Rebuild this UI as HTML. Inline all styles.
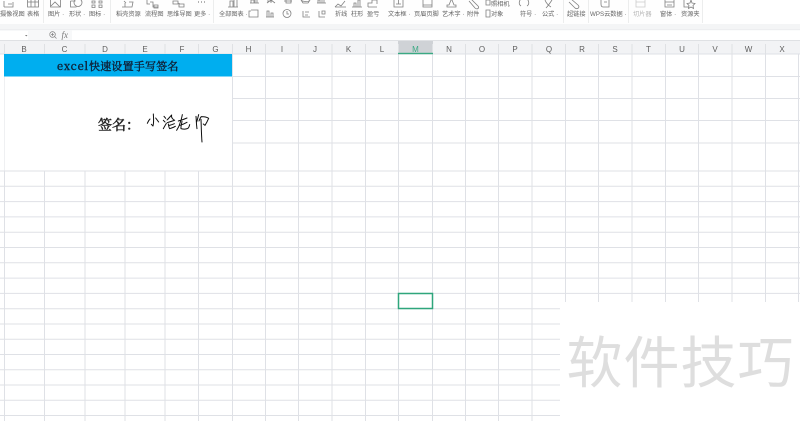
<!DOCTYPE html>
<html lang="zh"><head><meta charset="utf-8"><title>excel快速设置手写签名</title>
<style>
html,body{margin:0;padding:0;background:#fff}
svg{display:block}
.tb text{font:6.2px "Liberation Sans","Noto Sans CJK SC",sans-serif;fill:#666}
.ic{fill:none;stroke:#808080;stroke-width:.8}
.h text{font:8px "Liberation Sans","Noto Sans CJK SC",sans-serif;fill:#5f5f5f;text-anchor:middle}
</style></head><body>
<svg width="800" height="421" viewBox="0 0 800 421" xmlns="http://www.w3.org/2000/svg">
<defs><filter id="b" x="-2%" y="-10%" width="104%" height="120%"><feGaussianBlur stdDeviation=".3"/></filter>
<filter id="s" x="-5%" y="-5%" width="110%" height="110%"><feGaussianBlur stdDeviation=".25"/></filter></defs>
<rect width="800" height="421" fill="#fff"/>
<!-- toolbar -->
<rect x="0" y="0" width="702" height="24" fill="#fefefe"/>
<rect x="0" y="24" width="800" height="6" fill="#f4f5f6"/>
<rect x="0" y="29.5" width="800" height="1" fill="#e6e7e9"/>
<rect x="0" y="30" width="800" height="11" fill="#f7f8f9"/>
<rect x="0" y="31" width="28" height="9" fill="#fff"/>
<rect x="72" y="30.5" width="728" height="10" fill="#fff"/>
<path d="M25 35h2.5l-1.2 1.4z" fill="#777"/>
<g stroke="#eceded" stroke-width="1"><path d="M43.5 0V23M110.5 0V23M213.5 0V23M563.5 0V23M588.5 0V23M628.5 0V23M702.5 0V23"/></g>
<g class="tb" filter="url(#b)">
<text x="0" y="16">摄像视图</text><text x="27" y="16">表格</text>
<text x="48" y="16">图片 ·</text><text x="69" y="16">形状 ·</text><text x="89" y="16">图标 ·</text>
<text x="116" y="16">稻壳资源</text><text x="145" y="16">流程图</text><text x="167" y="16">思维导图</text><text x="194" y="16">更多 ·</text>
<text x="219" y="16">全部图表 ·</text>
<text x="335" y="16">折线</text><text x="351" y="16">柱形</text><text x="367" y="16">盈亏</text>
<text x="388" y="16">文本框 ·</text><text x="414" y="16">页眉页脚</text><text x="442" y="16">艺术字 ·</text>
<text x="467" y="16">附件</text><text x="491" y="16">对象</text><text x="520" y="16">符号 ·</text>
<text x="542" y="16">公式 ·</text><text x="567" y="16">超链接</text><text x="590" y="16">WPS云数据 ·</text>
<text x="633" y="16" style="fill:#b5b5b5">切片器</text><text x="660" y="16">窗体 ·</text><text x="681" y="16">资源夹</text>
<text x="491" y="6">照相机</text>
</g>
<g class="ic" filter="url(#b)">
<path d="M4 7V1M4 7h9V2M8 4h4"/>
<path d="M27.5-2h11v9h-11zM27.5 2h11M31 -2v9M35 -2v9"/>
<path d="M50.5-2h10v9h-10zM51 6l4-4 5 5"/>
<circle cx="78" cy="2.5" r="4"/><path d="M70.5 1h5M70.5 1v6h6"/>
<path d="M92 1h3v2h-3zM99 1h3v2h-3zM92 5h3v2.500h-3zM99 5h3v2.500h-3z"/>
<path d="M122 7h10l1-5h-4M124 1l2 2M125 7V3"/>
<path d="M147 -2v6h3M150 2h3v5h5M154 5h4v3h-4z"/>
<path d="M173 1h5v3h-5zM179 7h5v-3h-5zM178 3l2 1"/>
<path d="M198 2h.8M201 2h.8M204 2h.8" stroke-width="1.400"/>
<path d="M228 7h10M230 7V1h3v6M234 7V-2h3v9"/>
<path d="M251 3V0h3v3M255 3v-4h2v4M250 3h9"/>
<path d="M267 3l4-3 4 3M267 1h6M271 0v3"/><path d="M284 1h8M286 -1h5v4h-5z"/><path d="M301 0c2 2 8 2 9 0l-2 3h-5z"/><path d="M318 3V0h2v3M322 3V-1h2v4M317 3h9"/>
<path d="M251 10h7v7h-9v-6h2"/><path d="M267 17v-6h2v6M271 17v-4h2v4M266 17h8"/><circle cx="287" cy="13.500" r="4"/><path d="M287 11v3h2"/>
<path d="M303 11v6h7M305 12h4M305 15h3"/><path d="M319 11v6h6M322 11h3v3h-3z"/>
<path d="M335 7l3-3 3 2 4-5M335 7h11"/><path d="M352 7h10M354 7V3h2v4M358 7V0h2v7"/><path d="M368 7h9M368 7V3h4V0h5v4"/>
<path d="M394-2h9v9h-9zM396 4h5M398.500 0v4"/>
<path d="M423-2h9v9h-9zM423 5h9"/>
<path d="M451 0l-2 5h-2v2h9v-2h-2l-2-5z"/>
<path d="M471 -1l7 7c2 2-1 4-3 2l-6-7"/>
<path d="M486 0h4v5h-4zM486 10h4v7h-4z"/>
<path d="M521 6c-3-2-2-8 3-8s6 6 3 8"/><path d="M545 0c1 3 4 6 6 7M552 0c-2 3-4 6-6 8"/>
<path d="M571-1l7 6c2 2 0 5-3 3l-6-6"/>
<path d="M601 -2h8v9h-6c-2 0-2-2-2-3zM604 2h3"/>
<path d="M636-2h9v9h-9zM636 2h9" style="stroke:#ccc"/>
<path d="M665-2h9v9h-9zM665 2h9M667 5h5"/>
<path d="M684 0v7h5M691 0l1 3 3 .5-2 2 .5 3-2.500-1.500-2.500 1.500.5-3-2-2 3-.5z"/>
</g>
<!-- formula bar -->
<g class="ic" style="stroke:#888" filter="url(#b)"><circle cx="52.500" cy="34.500" r="2.800"/><path d="M54.500 36.500l2 2M51 34.500h3M52.500 33v3"/></g>
<text x="61.500" y="38" style="font:italic 9px 'Liberation Serif',serif;fill:#777">fx</text>
<!-- header -->
<rect x="0" y="41" width="800" height="13" fill="#f2f3f5"/>
<rect x="398" y="41" width="35" height="13" fill="#cfd2d6"/>
<g stroke="#dfe1e4" stroke-width="1"><path d="M0 40.500H800M4.500 44V54M44.500 44V54M85 44V54M125 44V54M165 44V54M198.500 44V54M232.500 44V54M265.500 44V54M298.500 44V54M332 44V54M365.500 44V54M398.500 44V54M432.500 44V54M465.500 44V54M498.500 44V54M532 44V54M565.500 44V54M598.500 44V54M632 44V54M665.500 44V54M698.500 44V54M732 44V54M765.500 44V54"/></g>
<!-- grid -->
<g stroke="#dfe1e6" stroke-width="1" fill="none" filter="url(#s)">
<path d="M0 54H800M232 76.500H800M232 98.500H800M232 120.500H800M232 143H800M0 171H800M0 186.300H800M0 201.600H800M0 216.900H800M0 232.200H800M0 247.500H800M0 262.800H800M0 278.100H800M0 293.400H800M0 308.700H800M0 324H800M0 339.200H800M0 354.500H800M0 369.800H800M0 385H800M0 400.300H800M0 415.500H800"/>
<path d="M4.500 54V421M44.500 171V421M85 171V421M125 171V421M165 171V421M198.500 171V421M232.500 54V421M265.500 54V421M298.500 54V421M332 54V421M365.500 54V421M398.500 54V421M432.500 54V421M465.500 54V421M498.500 54V421M532 54V421M565.500 54V421M598.500 54V421M632 54V421M665.500 54V421M698.500 54V421M732 54V421M765.500 54V421M798.500 54V421"/>
</g>
<!-- merged cell -->
<rect x="4.500" y="76.500" width="227.500" height="94" fill="#fff"/>
<rect x="4" y="54" width="228" height="22.500" fill="#00aeef"/>
<g filter="url(#s)">
<text x="57" y="70" style="font:400 11px 'Noto Serif CJK SC','Liberation Serif',serif;fill:#10233a;stroke:#10233a;stroke-width:.45"><tspan style="letter-spacing:.9px">excel</tspan><tspan style="letter-spacing:.2px">快速设置手写签名</tspan></text>
<text x="98" y="130" style="font:400 14px 'Noto Serif CJK SC','Liberation Serif',serif;fill:#222;stroke:#222;stroke-width:.5;letter-spacing:0">签名：</text>
<g transform="translate(130 100) scale(.3333)" fill="none" stroke="#111" stroke-width="3" stroke-linecap="round" stroke-linejoin="round">
<path d="M70 42C71 55 72 68 69 78L64 73M52 70C54 65 57 60 60 57M77 54C80 58 83 62 86 66"/>
<path d="M102 49L107 55M100 61L105 66M100 86C103 80 106 75 109 70M111 60C116 56 120 50 125 45C123 52 127 57 134 61M112 68C118 66 124 64 131 62M115 72C116 77 116 82 119 86C124 84 130 83 136 79M118 76C123 75 128 73 133 71"/>
<path d="M145 63C153 61 162 58 171 54M157 44C155 56 150 70 147 78C145 83 142 87 140 91M156 64C155 72 152 80 153 86C160 88 170 88 175 84C177 82 178 78 179 74M150 76C157 74 164 71 171 67"/>
<path d="M198 49C199 60 199 73 201 86M206 44C204 52 202 60 200 66M207 63C209 58 211 53 214 50C220 50 228 50 236 55C233 62 229 70 225 76L220 72M213 58C214 80 214 102 216 126"/>
</g>
</g>
<!-- selection -->
<rect x="398" y="52.800" width="35" height="1.400" fill="#3aa983"/>
<rect x="398.500" y="293.500" width="34" height="15" fill="#fff" stroke="#2fa67c" stroke-width="1.500"/>
<!-- header letters -->
<g class="h" filter="url(#b)">
<text x="24" y="52">B</text><text x="64.500" y="52">C</text><text x="105" y="52">D</text><text x="145" y="52">E</text><text x="182" y="52">F</text><text x="215.500" y="52">G</text><text x="248.500" y="52">H</text><text x="282" y="52">I</text><text x="315" y="52">J</text><text x="348.500" y="52">K</text><text x="382" y="52">L</text><text x="415.500" y="52" style="fill:#3aa983">M</text><text x="449" y="52">N</text><text x="482" y="52">O</text><text x="515" y="52">P</text><text x="549" y="52">Q</text><text x="582" y="52">R</text><text x="615" y="52">S</text><text x="648.500" y="52">T</text><text x="682" y="52">U</text><text x="715" y="52">V</text><text x="748.500" y="52">W</text><text x="782" y="52">X</text>
</g>
<!-- watermark -->
<rect x="560" y="302" width="240" height="119" fill="#fff"/>
<text x="566.500" y="383" style="font:400 56px 'Noto Sans CJK SC','WenQuanYi Zen Hei',sans-serif;fill:#dedede;letter-spacing:1px">软件技巧</text>
</svg>
</body></html>
